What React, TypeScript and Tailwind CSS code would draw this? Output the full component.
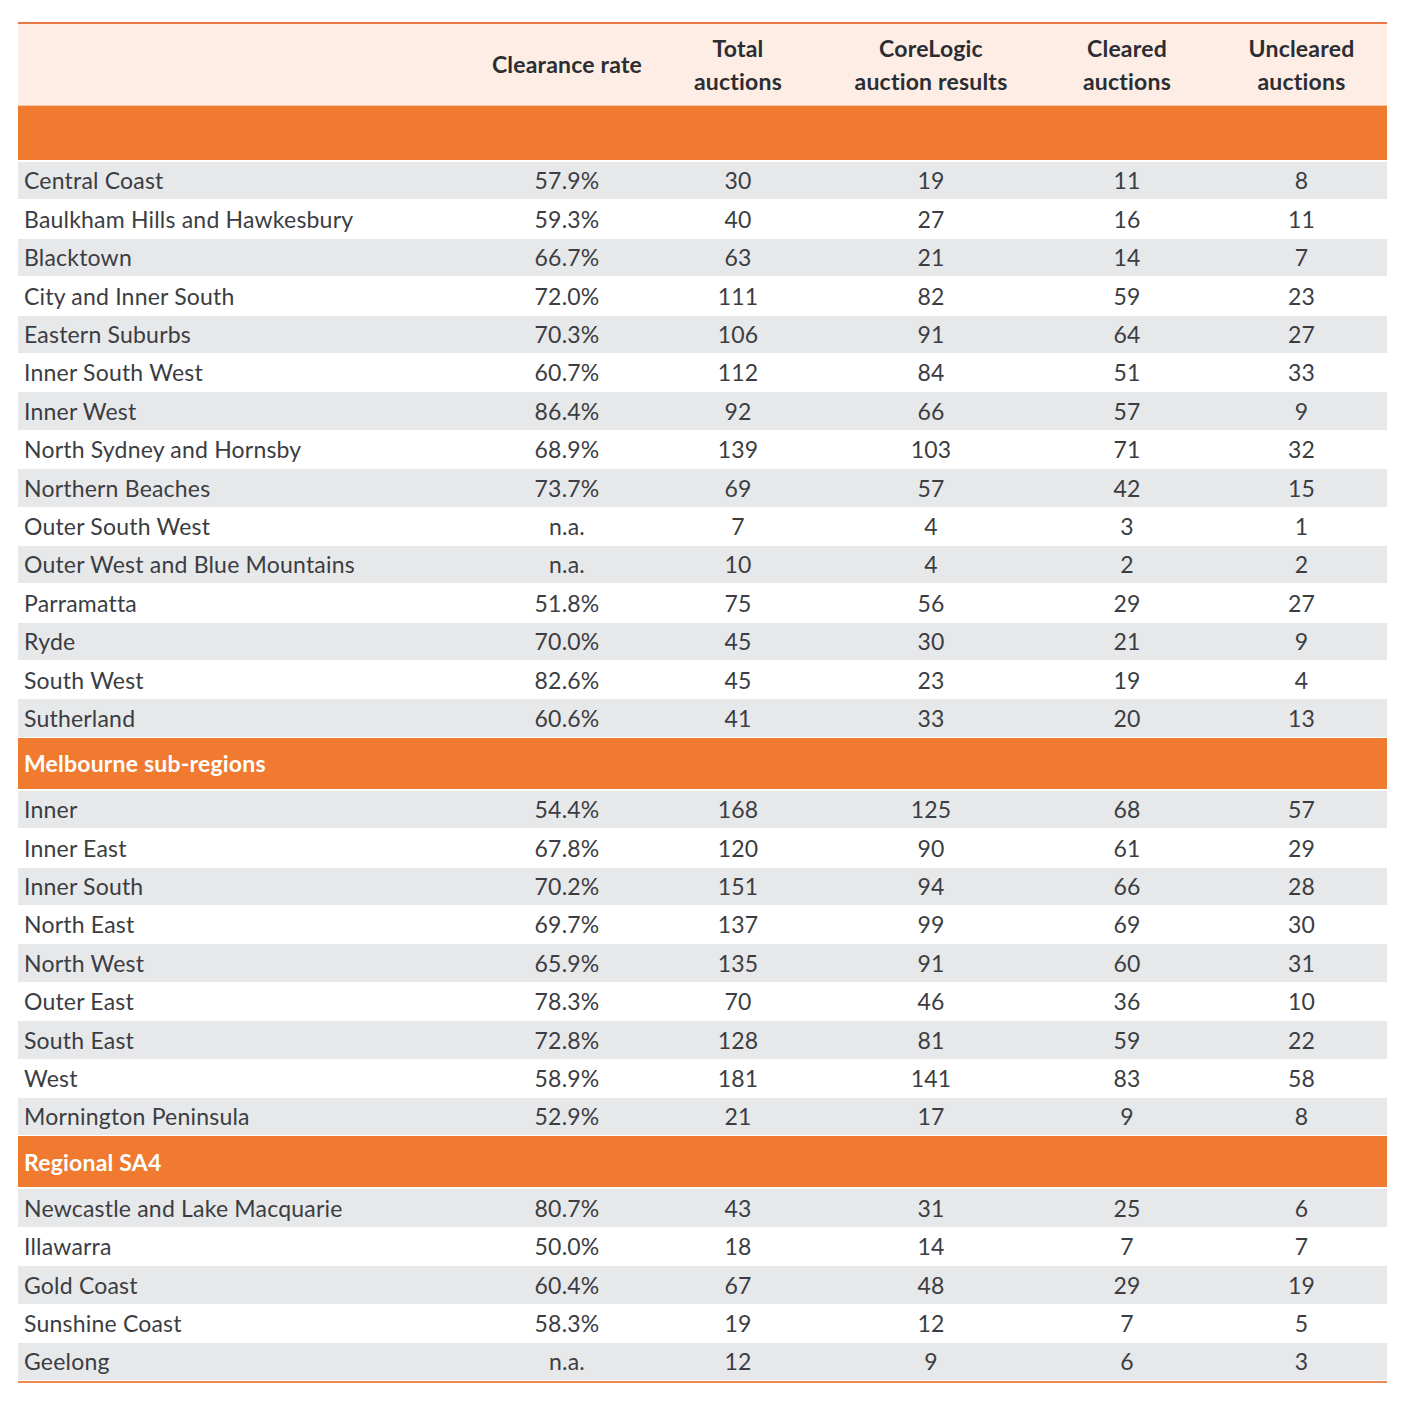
const sydney = [
  ['Central Coast', '57.9%', '30', '19', '11', '8'],
  ['Baulkham Hills and Hawkesbury', '59.3%', '40', '27', '16', '11'],
  ['Blacktown', '66.7%', '63', '21', '14', '7'],
  ['City and Inner South', '72.0%', '111', '82', '59', '23'],
  ['Eastern Suburbs', '70.3%', '106', '91', '64', '27'],
  ['Inner South West', '60.7%', '112', '84', '51', '33'],
  ['Inner West', '86.4%', '92', '66', '57', '9'],
  ['North Sydney and Hornsby', '68.9%', '139', '103', '71', '32'],
  ['Northern Beaches', '73.7%', '69', '57', '42', '15'],
  ['Outer South West', 'n.a.', '7', '4', '3', '1'],
  ['Outer West and Blue Mountains', 'n.a.', '10', '4', '2', '2'],
  ['Parramatta', '51.8%', '75', '56', '29', '27'],
  ['Ryde', '70.0%', '45', '30', '21', '9'],
  ['South West', '82.6%', '45', '23', '19', '4'],
  ['Sutherland', '60.6%', '41', '33', '20', '13'],
]

const melbourne = [
  ['Inner', '54.4%', '168', '125', '68', '57'],
  ['Inner East', '67.8%', '120', '90', '61', '29'],
  ['Inner South', '70.2%', '151', '94', '66', '28'],
  ['North East', '69.7%', '137', '99', '69', '30'],
  ['North West', '65.9%', '135', '91', '60', '31'],
  ['Outer East', '78.3%', '70', '46', '36', '10'],
  ['South East', '72.8%', '128', '81', '59', '22'],
  ['West', '58.9%', '181', '141', '83', '58'],
  ['Mornington Peninsula', '52.9%', '21', '17', '9', '8'],
]

const regional = [
  ['Newcastle and Lake Macquarie', '80.7%', '43', '31', '25', '6'],
  ['Illawarra', '50.0%', '18', '14', '7', '7'],
  ['Gold Coast', '60.4%', '67', '48', '29', '19'],
  ['Sunshine Coast', '58.3%', '19', '12', '7', '5'],
  ['Geelong', 'n.a.', '12', '9', '6', '3'],
]

const cols = 'grid grid-cols-[464px_170px_172px_214px_178px_171px]'

function Rows({ rows }: { rows: string[][] }) {
  return (
    <>
      {rows.map((r, i) => (
        <div
          key={r[0]}
          className={`${cols} h-[38.4px] items-center ${i % 2 === 0 ? 'bg-[#e7e8ea]' : 'bg-white'} border-b border-white`}
        >
          <div className="pl-[6px] whitespace-nowrap">{r[0]}</div>
          {r.slice(1).map((v, j) => (
            <div key={j} className="text-center">
              {v}
            </div>
          ))}
        </div>
      ))}
    </>
  )
}

function Section({ title, tall }: { title: string; tall?: boolean }) {
  return (
    <div
      className={`${tall ? 'h-[56px]' : 'h-[53px]'} bg-[#f07a30] flex items-center pl-[6px] text-white font-bold border-b-2 border-white`}
    >
      {title}
    </div>
  )
}

export default function App() {
  return (
    <div className="bg-white min-h-[1404px] w-[1414px] pt-[22px] pl-[18px] font-['Lato',sans-serif] text-[23px] tracking-[0.2px] text-[#3b3d42]">
      <div className="w-[1369px] border-t-2 border-b-2 border-[#e8774a] border-b-[#e98a55]">
        {/* Header */}
        <div className={`${cols} h-[82px] items-center bg-[#fdede4] font-bold text-[#2b2d33] leading-[33px] border-b border-[#f3c7a8]`}>
          <div />
          <div className="text-center">Clearance rate</div>
          <div className="text-center">Total<br />auctions</div>
          <div className="text-center">CoreLogic<br />auction results</div>
          <div className="text-center">Cleared<br />auctions</div>
          <div className="text-center">Uncleared<br />auctions</div>
        </div>

        <Section title="" tall />
        <Rows rows={sydney} />
        <Section title="Melbourne sub-regions" />
        <Rows rows={melbourne} />
        <Section title="Regional SA4" />
        <Rows rows={regional} />
      </div>
    </div>
  )
}
